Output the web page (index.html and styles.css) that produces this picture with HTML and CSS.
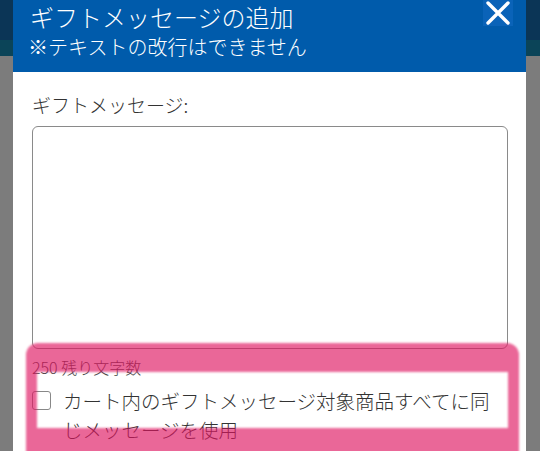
FILE: index.html
```html
<!DOCTYPE html>
<html lang="ja">
<head>
<meta charset="utf-8">
<link rel="stylesheet" href="styles.css">
</head>
<body>
<div class="modal">
  <div class="header">
    <div class="titles">
      <div class="title">ギフトメッセージの追加</div>
      <div class="subtitle">※テキストの改行はできません</div>
    </div>
    <button class="close" aria-label="閉じる">
      <svg width="24" height="24" viewBox="0 0 24 24"><path d="M2 2 L22 22 M22 2 L2 22" stroke="#fff" stroke-width="3.4" stroke-linecap="round"/></svg>
    </button>
  </div>
  <div class="content">
    <label class="label">ギフトメッセージ:</label>
    <textarea class="message"></textarea>
    <div class="count">250 残り文字数</div>
    <label class="check-row">
      <span class="box"></span>
      <span class="check-text">カート内のギフトメッセージ対象商品すべてに同じメッセージを使用</span>
    </label>
  </div>
  <div class="highlight"></div>
</div>
</body>
</html>
```

FILE: styles.css
```css
html, body {
  margin: 0;
  padding: 0;
  height: 451px;
  overflow: hidden;
}
body {
  background: linear-gradient(#0b3556 0 40px, #0b4458 40px 56px, #7c7c7c 56px);
  font-family: "Noto Sans CJK JP", "Noto Sans", sans-serif;
  font-weight: 300;
}
.modal {
  position: relative;
  margin: 0 14px 0 13px;
  height: 451px;
  background: #fff;
}
.header {
  height: 72px;
  background: #005bab;
  color: #fff;
  display: flex;
  justify-content: space-between;
  padding: 0 13px 0 17px;
  box-sizing: border-box;
}
.title {
  font-size: 24px;
  line-height: 32px;
  padding-top: 1px;
}
.subtitle {
  font-size: 20px;
  line-height: 28px;
  margin-left: -2px;
}
.close {
  width: 30px;
  height: 26px;
  padding: 0;
  margin: 0;
  border: none;
  background: #0a63b8;
  display: flex;
  align-items: center;
  justify-content: center;
}
.content {
  padding: 20px 18px 0 19px;
  display: flex;
  flex-direction: column;
}
.label {
  font-size: 19px;
  line-height: 26px;
  color: #333;
}
.message {
  margin-top: 8px;
  height: 223px;
  box-sizing: border-box;
  border: 1px solid #8a8a8a;
  border-radius: 6px;
  resize: none;
  background: #fff;
}
.count {
  margin-top: 7px;
  font-size: 16px;
  line-height: 22px;
  color: #444;
}
.check-row {
  margin-top: 8px;
  display: flex;
  align-items: flex-start;
  gap: 12px;
}
.box {
  flex: none;
  width: 17px;
  height: 17px;
  margin-top: 5px;
  border: 1px solid #888;
  border-radius: 3px;
  background: #fff;
}
.check-text {
  font-size: 19.5px;
  line-height: 29px;
  color: #333;
}
.highlight {
  position: absolute;
  left: 13px;
  top: 343px;
  width: 493px;
  height: 125px;
  box-sizing: border-box;
  border-style: solid;
  border-color: rgba(223, 21, 97, 0.65);
  border-width: 29px 11px 40px 11px;
  border-radius: 12px;
  filter: blur(0.8px);
}
```
